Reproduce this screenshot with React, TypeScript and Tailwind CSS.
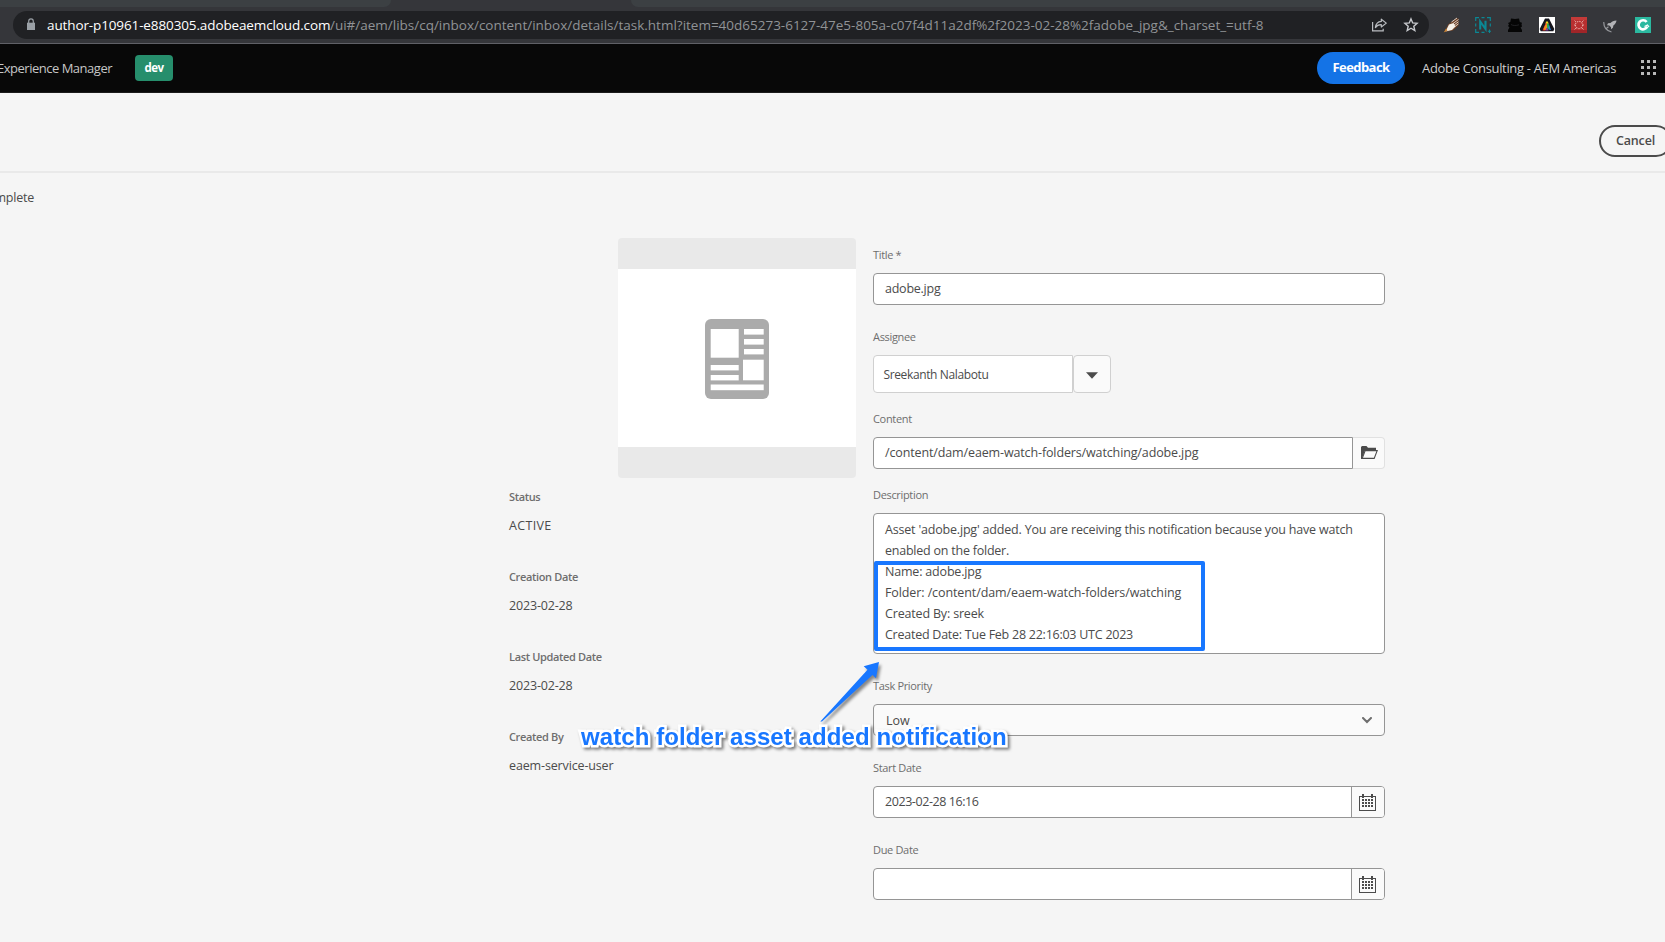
import type { ReactNode } from "react";

function ShareIcon() {
  return (
    <svg width="16" height="16" viewBox="0 0 16 16" fill="none" stroke="#b9bcc0" strokeWidth="1.2">
      <path d="M1.6 5v8.9h10.600v-2.200" />
      <path d="M10.300 2.200 15.300 6.100 10.300 10V7.700C7.500 7.600 5.700 8.600 4.400 10.600 4.800 7.300 6.700 4.700 10.300 4.400Z" strokeLinejoin="round" />
    </svg>
  );
}

function StarIcon() {
  return (
    <svg width="16" height="16" viewBox="0 0 16 16" fill="none" stroke="#c8cace" strokeWidth="1.4">
      <path d="m8 1.9 1.7 4 4.4.4-3.3 2.9 1 4.3L8 11.2l-3.8 2.3 1-4.3-3.3-2.9 4.4-.4Z" />
    </svg>
  );
}

function Extensions() {
  return (
    <div className="flex items-center gap-4">
      <svg width="16" height="16" viewBox="0 0 16 16">
        <path d="M1.500 15 5 7.500 13.500 1l2 .5v7l-5.500 5Z" fill="#6b3f24" />
        <path d="M2.500 14.500 6 7.500l4.500-1.500 2 3.500-3.500 3.500Z" fill="#f4f0e8" />
        <path d="m8.500 5 5.500-4M10 6.500l5.500-4M11 8l4.500-3.200M12 9.500l3.500-2.700" stroke="#e8ded6" strokeWidth="0.9" />
        <path d="M.7 15.500 4.500 13.500 3 11.500Z" fill="#c9822f" />
      </svg>
      <svg width="16" height="16" viewBox="0 0 16 16" fill="none" stroke="#0b8794">
        <path d="M.7 4V.7H4M6.500.7h3M12 .7h3.300V4M15.300 6.500v3M.7 6.500v3M.7 12v3.300H4M6.500 15.300h3" strokeWidth="1.2" />
        <path d="M14.500 12.500v3.500M12.800 14.200h3.400" strokeWidth="1.1" />
        <path d="M5.200 12.500V4.500l5.300 7.500V3.700" strokeWidth="2.100" />
      </svg>
      <svg width="16" height="16" viewBox="0 0 16 16">
        <path d="M4 1.500 8 2l4-.5.8 3.500 2.200.8-.5 1.700.5 2-1.500 1 1.500 2.500V15H1v-2l1.500-2.500L1 9l1-1.500L1 6l2.300-1Z" fill="#050505" />
        <path d="M4 7.500c2 1.300 5 1.300 8 .3" stroke="#2c2d30" fill="none" strokeWidth="0.7" />
      </svg>
      <svg width="16" height="16" viewBox="0 0 16 16">
        <path d="M0 0h16v16H0z" fill="#fff" />
        <path d="M6 1.500h4L15.300 12l-1 2.300H1.700L.7 12Z" fill="#15151c" />
        <path d="M7 4.500h2l.5 2.500H6.500Z" fill="#f7d51d" />
        <path d="M6.500 6.500h1.700V10L6 13.500H3.500Z" fill="#e5322d" />
        <path d="M6.300 8 8 7v4l-1.800 2.500L4.500 12Z" fill="#f28c1b" />
        <path d="M8 6.500h1.500L10.500 10l-1 3L8 11Z" fill="#2fae4a" />
        <path d="m10 7.500 2 5.500h-1.500L9.500 11Z" fill="#2a7bd8" />
        <path d="m8 10.500 1.500 3H6.500Z" fill="#8d3bb0" />
      </svg>
      <svg width="16" height="16" viewBox="0 0 16 16">
        <path d="M0 0h16v16H0z" fill="#b92f30" />
        <path d="M0 0h16v3H0z" fill="#c43a38" />
        <path d="M0 13h16v3H0z" fill="#a02528" />
        <circle cx="8" cy="8" r="3.600" fill="none" stroke="#e9a5a1" strokeWidth="1.100" strokeDasharray="1.400 1" />
        <path d="m3.500 3.500 1.500 1.500M12.500 3.500 11 5M3.500 12.500 5 11M12.500 12.500 11 11M3 8h1.500M11.500 8H13" stroke="#e9b5b2" strokeWidth="0.800" />
      </svg>
      <svg width="16" height="16" viewBox="0 0 16 16">
        <path d="M13.500 3.500c-3 .2-4.500 1-6 2.500L5 6.300 4 8.300l2.300.2 1.700 1.800v2l1.900-1.500.5-2.200c1.700-1.300 2.800-3 3.100-5.100Z" fill="#b2b3b6" />
        <path d="M.8 5C.6 9.500 3 13.500 8.500 15M5.500 9.800 2.500 12" stroke="#94969a" strokeWidth="1.200" fill="none" />
      </svg>
      <svg width="16" height="16" viewBox="0 0 16 16">
        <path d="M0 0h16v16H0z" fill="#2bb9a0" />
        <path d="M11.600 5A4.500 4.500 0 1 0 12.200 9.500" fill="none" stroke="#fff" strokeWidth="2.700" />
        <path d="m9.500 9.500 3-1.500 1.500 2" fill="none" stroke="#fff" strokeWidth="1.200" />
      </svg>
    </div>
  );
}

function BrowserBar() {
  return (
    <div className="h-11 shrink-0 border-b border-[#606167] bg-[#35363a]">
      <div className="flex h-[7px] justify-between">
        <div className="w-[391px] rounded-br-lg bg-[#3c4043]" />
        <div className="w-[1034px] rounded-bl-lg bg-[#3c4043]" />
      </div>
      <div className="flex items-center pt-1 pl-[13px]">
        <div className="flex h-7 w-[1416px] items-center rounded-full bg-[#202124] pr-[10px] pl-[13px]">
          <svg width="10" height="12" viewBox="0 0 10 12" className="mb-[2px]">
            <path d="M1 4.700h8V12H1z" fill="#9aa0a6" />
            <path d="M2.700 5V3.200a2.300 2.300 0 0 1 4.600 0V5" fill="none" stroke="#9aa0a6" strokeWidth="1.200" />
          </svg>
          <div className="ml-[11px] flex grow text-[13.5px] leading-5 whitespace-nowrap">
            <span className="w-[283px] tracking-[-0.12px] text-white">author-p10961-e880305.adobeaemcloud.com</span>
            <span className="tracking-[-0.007px] text-[#909396]">
              /ui#/aem/libs/cq/inbox/content/inbox/details/task.html?item=40d65273-6127-47e5-805a-c07f4d11a2df%2f2023-02-28%2fadobe_jpg&amp;_charset_=utf-8
            </span>
          </div>
          <div className="flex gap-4">
            <ShareIcon />
            <StarIcon />
          </div>
        </div>
        <div className="ml-[14px]">
          <Extensions />
        </div>
      </div>
    </div>
  );
}

function Header() {
  const dots = [0, 6, 12];
  return (
    <header className="flex h-[49px] shrink-0 items-center border-b border-[#1c1c1c] bg-[#080808] whitespace-nowrap">
      <span className="-ml-[3px] w-[138px] pt-[2px] text-[13px] font-medium tracking-[-0.49px] text-[#c6c6c6]">
        Experience Manager
      </span>
      <span className="flex h-[26px] w-[38px] items-center justify-center rounded bg-[#268e6c] text-[11.5px] font-bold tracking-[-0.6px] text-white">
        dev
      </span>
      <button className="ml-auto flex h-8 w-[88px] items-center justify-center rounded-full bg-[#1473e6] pb-px text-[13px] font-bold tracking-[-0.57px] text-white">
        Feedback
      </button>
      <span className="ml-[17px] w-[219px] pt-[2px] text-[13px] tracking-[-0.33px] text-[#cfcfcf]">
        Adobe Consulting - AEM Americas
      </span>
      <svg width="15" height="15" viewBox="0 0 15 15" fill="#b8b8b8" className="mr-[9px] mb-px">
        {dots.map((y) => dots.map((x) => <rect key={`${x}-${y}`} x={x} y={y} width="3" height="3" />))}
      </svg>
    </header>
  );
}

function Thumbnail() {
  return (
    <div className="ml-[109px] flex h-60 w-[238px] flex-col overflow-hidden rounded bg-[#e9e9e9] py-[31px]">
      <div className="flex grow items-center justify-center bg-white pt-[2px]">
        <svg width="64" height="80" viewBox="0 0 64 80">
          <rect width="64" height="80" rx="6" fill="#ababab" />
          <g fill="#fff">
            <rect x="5.700" y="10" width="28" height="28.700" />
            <rect x="39" y="10" width="19.700" height="5.600" />
            <rect x="39" y="20" width="19.700" height="5.600" />
            <rect x="39" y="30" width="19.700" height="5.400" />
            <rect x="38" y="40.700" width="20.700" height="20.600" />
            <rect x="5.700" y="46" width="28" height="5.400" />
            <rect x="5.700" y="56" width="28" height="5.400" />
            <rect x="5.700" y="65.500" width="53" height="5.700" />
          </g>
        </svg>
      </div>
    </div>
  );
}

function Meta({ label, children }: { label: string; children: ReactNode }) {
  return (
    <div className="h-20">
      <div className="h-7 text-[11px] leading-[18px] font-semibold tracking-[-0.35px] text-[#6e6e6e]">{label}</div>
      <div className="text-[12.5px] leading-5 text-[#4b4b4b]">{children}</div>
    </div>
  );
}

function Label({ children }: { children: ReactNode }) {
  return <div className="mb-2 h-5 text-[11px] leading-5 tracking-[-0.33px] text-[#6e6e6e]">{children}</div>;
}

function CalendarIcon() {
  const cols = [3, 6, 9, 12];
  const rows = [5, 8, 11];
  return (
    <svg width="17" height="17" viewBox="0 0 17 17" fill="#4b4b4b">
      <path d="M0 2h17v15H0Zm1 1v13h15V3Z" fillRule="evenodd" />
      <path d="M3 0h2v4H3zM12 0h2v4h-2z" />
      {rows.map((y) => cols.map((x) => <rect key={`${x}-${y}`} x={x} y={y} width="2" height="2" />))}
    </svg>
  );
}

function DateField({ value }: { value: string }) {
  return (
    <div className="flex h-8 w-[512px] overflow-hidden rounded border border-[#959595] bg-white">
      <div className="grow pl-[11px] text-[12.5px] leading-[29px] tracking-[-0.43px] text-[#4b4b4b]">{value}</div>
      <div className="flex w-[33px] items-center justify-start border-l border-[#959595] bg-[#fafafa] pl-[7px]">
        <CalendarIcon />
      </div>
    </div>
  );
}

function Annotation() {
  return (
    <>
      <div className="absolute top-[561px] left-[874px] h-[90px] w-[331px] rounded-[2px] border-4 border-[#1877ff]" />
      <svg className="absolute top-[655px] left-[812px] overflow-visible" width="75" height="75" viewBox="812 655 75 75">
        <path
          d="M820.300 721.500 867.500 669.800 863.700 666.200 879 662 876 678.300 872.500 675 822 721.500Z"
          fill="#1877ff"
          className="drop-shadow-[2px_3px_1.5px_rgba(0,0,0,0.45)]"
        />
      </svg>
      <div className="absolute top-[722px] left-[581px] font-['Liberation_Sans',sans-serif] text-[24px] leading-[30px] font-bold tracking-[0.08px] whitespace-nowrap text-[#1877ff] drop-shadow-[2px_2px_1.5px_rgba(0,0,0,0.5)] [-webkit-text-stroke:5px_white] [paint-order:stroke_fill]">
        watch folder asset added notification
      </div>
    </>
  );
}

export default function App() {
  return (
    <div className="relative flex h-[942px] w-[1665px] flex-col overflow-hidden bg-[#f5f5f5] font-['Open_Sans','Noto_Sans',sans-serif]">
      <BrowserBar />
      <Header />
      <div className="flex h-20 shrink-0 items-center justify-end overflow-hidden border-b-2 border-[#e9e9e9] pt-[18px]">
        <button className="mt-[-1px] -mr-[7px] flex h-8 w-[73px] shrink-0 items-center justify-center rounded-full border-2 border-[#4b4b4b] pt-px text-[12.5px] leading-5 font-semibold tracking-[-0.16px] text-[#4b4b4b]">
          Cancel
        </button>
      </div>
      <div className="-ml-[5.5px] h-[65px] shrink-0 pt-[15px] text-[12.5px] leading-5 tracking-[-0.2px] text-[#4b4b4b]">
        mplete
      </div>

      <div className="flex pl-[509px]">
        <div className="w-[364px]">
          <Thumbnail />
          <div className="mt-[10px]">
            <Meta label="Status">
              <span className="tracking-[0.35px]">ACTIVE</span>
            </Meta>
            <Meta label="Creation Date">
              <span className="tracking-[-0.17px]">2023-02-28</span>
            </Meta>
            <Meta label="Last Updated Date">
              <span className="tracking-[-0.17px]">2023-02-28</span>
            </Meta>
            <Meta label="Created By">
              <span className="tracking-[-0.14px]">eaem-service-user</span>
            </Meta>
          </div>
        </div>

        <div className="w-[512px] pt-[7px]">
          <Label>Title *</Label>
          <div className="h-8 rounded border border-[#959595] bg-white pl-[11px] text-[12.5px] leading-[29px] tracking-[-0.24px] text-[#4b4b4b]">
            adobe.jpg
          </div>

          <div className="mt-[22px]">
            <Label>Assignee</Label>
            <div className="flex h-[38px]">
              <div className="w-[200px] rounded-l border border-[#d0d0d0] bg-white pl-[9.5px] text-[12px] leading-[38px] tracking-[-0.37px] text-[#4b4b4b]">
                Sreekanth Nalabotu
              </div>
              <div className="flex w-[38px] items-center justify-center rounded border border-[#d0d0d0] bg-[#fafafa] pt-[3px]">
                <svg width="12" height="7" viewBox="0 0 12 7">
                  <path d="M0 .3h12L6 6.700Z" fill="#4b4b4b" />
                </svg>
              </div>
            </div>
          </div>

          <div className="mt-4">
            <Label>Content</Label>
            <div className="flex h-8">
              <div className="w-[480px] rounded-l border border-[#959595] bg-white pl-[11px] text-[12.5px] leading-[29px] tracking-[-0.13px] text-[#4b4b4b]">
                /content/dam/eaem-watch-folders/watching/adobe.jpg
              </div>
              <div className="flex w-8 items-center justify-center rounded-r border border-l-0 border-[#e1e1e1] bg-[#fafafa] pb-px pl-px">
                <svg width="17" height="13" viewBox="0 0 17 13">
                  <path d="M0 13V1l1-1h4.500L7 1.800h8V4H4.200L.8 13Z" fill="#4b4b4b" />
                  <path d="M4.200 4.600h12L13.200 12.400H1.200Z" fill="#fafafa" stroke="#4b4b4b" strokeWidth="1.100" />
                </svg>
              </div>
            </div>
          </div>

          <div className="mt-4">
            <Label>Description</Label>
            <div className="h-[141px] rounded border border-[#959595] bg-white pt-[5px] pl-[11px] text-[12.5px] leading-[21px] whitespace-nowrap text-[#4b4b4b]">
              <div className="tracking-[-0.185px]">
                Asset 'adobe.jpg' added. You are receiving this notification because you have watch
              </div>
              <div className="tracking-[-0.23px]">enabled on the folder.</div>
              <div className="tracking-[-0.19px]">Name: adobe.jpg</div>
              <div className="tracking-[-0.1px]">Folder: /content/dam/eaem-watch-folders/watching</div>
              <div className="tracking-[-0.17px]">Created By: sreek</div>
              <div className="tracking-[-0.25px]">Created Date: Tue Feb 28 22:16:03 UTC 2023</div>
            </div>
          </div>

          <div className="mt-[22px]">
            <Label>Task Priority</Label>
            <div className="flex h-8 justify-between rounded border border-[#959595] bg-[#fafafa] px-3">
              <span className="text-[12.5px] leading-[31px] text-[#4b4b4b]">Low</span>
              <svg width="10" height="7" viewBox="0 0 10 7" className="mt-3">
                <path d="m1 1 4 4 4-4" fill="none" stroke="#6e6e6e" strokeWidth="2" strokeLinecap="round" />
              </svg>
            </div>
          </div>

          <div className="mt-[22px]">
            <Label>Start Date</Label>
            <DateField value="2023-02-28 16:16" />
          </div>

          <div className="mt-[22px]">
            <Label>Due Date</Label>
            <DateField value="" />
          </div>
        </div>
      </div>

      <Annotation />
    </div>
  );
}
